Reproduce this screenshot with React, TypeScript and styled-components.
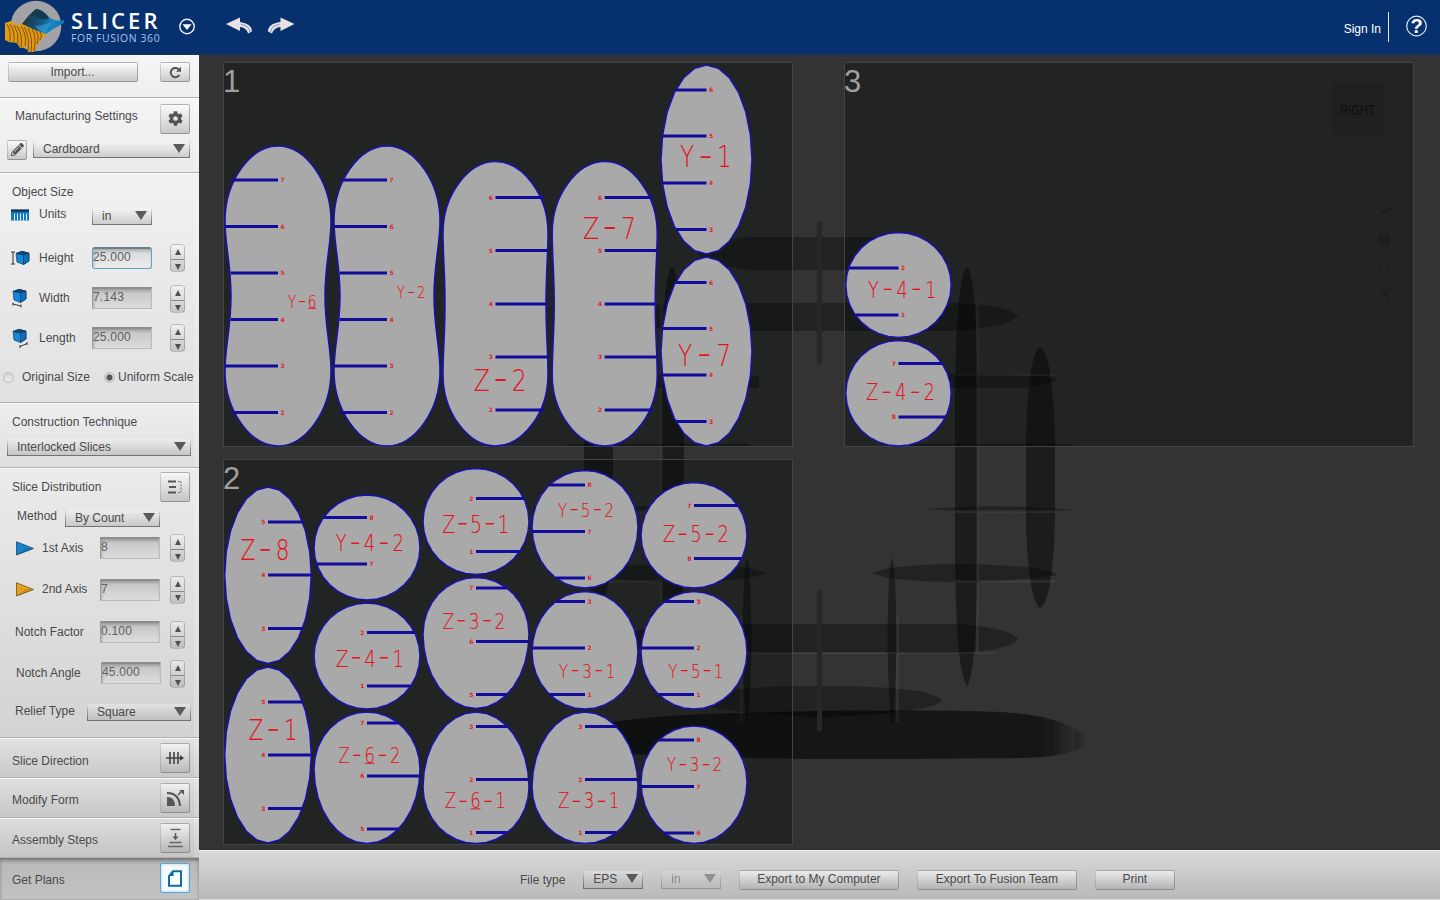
import React from "react";
import styled, { createGlobalStyle, css } from "styled-components";
import { FaCog, FaPencilAlt } from "react-icons/fa";

const GlobalStyle = createGlobalStyle`
  *, *::before, *::after { box-sizing: border-box; }
  body { margin: 0; background: #333; overflow: hidden; }
  body, button, input { font-family: "Liberation Sans", Arial, Helvetica, sans-serif; font-size: 12px; color: #4a4a4c; }
`;

const Page = styled.div`
  width: 1440px;
  height: 900px;
  display: flex;
  flex-direction: column;
`;

/* ---------- header ---------- */

const Header = styled.header`
  height: 55px;
  flex: none;
  display: flex;
  align-items: center;
  background: linear-gradient(#07306f 0, #07306e 52px, #16325a 55px);
  color: #fff;
`;

const LogoMark = styled.svg`
  width: 68px;
  height: 55px;
  flex: none;
`;

const Brand = styled.div`
  width: 109px;
  padding: 0 0 1px 3px;
  white-space: nowrap;
`;

const BrandName = styled.div`
  font: 600 22px/22px "Open Sans", sans-serif;
  letter-spacing: 3.1px;
`;

const BrandSub = styled.div`
  font: 400 10.4px/14px "Open Sans", sans-serif;
  letter-spacing: 0.62px;
  color: #a9c5ee;
`;

const HeaderIcon = styled.svg<{ $w: number; $ml?: number }>`
  width: ${(p) => p.$w}px;
  height: 24px;
  margin-left: ${(p) => p.$ml ?? 0}px;
  flex: none;
  overflow: visible;
`;

const Account = styled.div`
  margin-left: auto;
  display: flex;
  align-items: center;
  padding: 0 12px 2px 0;
`;

const SignIn = styled.a`
  font-size: 12px;
  padding: 4px 7px 0 0;
`;

const Divider = styled.span`
  width: 1px;
  height: 30px;
  background: #dfe8f8;
  margin-right: 16px;
`;

/* ---------- body ---------- */

const Body = styled.div`
  flex: 1;
  display: flex;
  min-height: 0;
`;

const Sidebar = styled.aside`
  width: 199px;
  flex: none;
  display: flex;
  flex-direction: column;
  background: #ddd;
`;

const Section = styled.section<{ $h: number; $from: string; $to: string; $active?: boolean }>`
  height: ${(p) => p.$h}px;
  flex: none;
  background: linear-gradient(${(p) => p.$from}, ${(p) => p.$to});
  border-bottom: 1px solid #b0b0b0;
  box-shadow: inset 0 1px 0 rgba(255, 255, 255, 0.75), inset -5px 0 0 rgba(255, 255, 255, 0.18);
  ${(p) =>
    p.$active &&
    css`
      box-shadow: inset 0 3px 4px -1px rgba(0, 0, 0, 0.45);
    `}
`;

const Row = styled.div<{ $h: number; $pl?: number; $align?: string }>`
  height: ${(p) => p.$h}px;
  display: flex;
  align-items: ${(p) => p.$align ?? "center"};
  padding-left: ${(p) => p.$pl ?? 12}px;
  padding-right: 9px;
`;

const Label = styled.span<{ $w?: number; $dy?: number }>`
  ${(p) => p.$w && `width: ${p.$w}px;`}
  flex: none;
  white-space: nowrap;
  letter-spacing: 0;
  line-height: 14px;
  margin-top: ${(p) => p.$dy ?? 0}px;
`;

const buttonFace = css`
  background: linear-gradient(rgba(255, 255, 255, 0.6), rgba(170, 170, 170, 0.55));
  border: 1px solid rgba(120, 120, 120, 0.3);
  border-bottom-color: rgba(80, 80, 80, 0.6);
  border-right-color: rgba(90, 90, 90, 0.45);
  border-radius: 2px;
`;

const PushButton = styled.button<{ $w: number }>`
  ${buttonFace}
  width: ${(p) => p.$w}px;
  height: 20px;
  padding: 0 1px 1px 0;
  letter-spacing: 0;
`;

const IconButton = styled.button<{ $w?: number; $h?: number; $active?: boolean }>`
  ${buttonFace}
  width: ${(p) => p.$w ?? 30}px;
  height: ${(p) => p.$h ?? 30}px;
  padding: 0;
  display: flex;
  align-items: center;
  justify-content: center;
  flex: none;
  color: #555;
  ${(p) =>
    p.$active &&
    css`
      background: #f6fafd;
      border-color: #5aa6d8;
      box-shadow: inset 0 0 3px #9fcdea;
    `}
`;

const Push = styled.span`
  flex: 1;
`;

const SelectBox = styled.div<{ $w: number; $h?: number; $pl?: number; $disabled?: boolean }>`
  width: ${(p) => p.$w}px;
  height: ${(p) => p.$h ?? 17}px;
  flex: none;
  display: flex;
  align-items: center;
  justify-content: space-between;
  padding: 0 4px 0 ${(p) => p.$pl ?? 10}px;
  line-height: 14px;
  letter-spacing: 0;
  white-space: nowrap;
  background: linear-gradient(rgba(255, 255, 255, 0.3), rgba(165, 165, 165, 0.45));
  border: solid #777;
  border-width: 0 1px 1px;
  border-image: linear-gradient(rgba(120, 120, 120, 0), rgba(90, 90, 90, 0.85)) 1;
  opacity: ${(p) => (p.$disabled ? 0.5 : 1)};
`;

const Caret = styled.span`
  width: 0;
  height: 0;
  margin-top: -1px;
  border: 6px solid transparent;
  border-top: 9px solid #5a5a5c;
  border-bottom: 0;
`;

const Select = ({ value, ...rest }: { value: string; $w: number; $h?: number; $pl?: number; $disabled?: boolean }) => (
  <SelectBox {...rest}>
    {value}
    <Caret />
  </SelectBox>
);

const Field = styled.input<{ $focus?: boolean }>`
  width: 60px;
  height: 22px;
  flex: none;
  padding: 0 0 3px 0;
  letter-spacing: 0.2px;
  color: #606060;
  border: 1px solid #bbb;
  border-top: 2px solid #8d8d8d;
  border-left-color: #999;
  border-radius: 1px;
  outline: none;
  background: linear-gradient(#c4c4c4, #dcdcdc);
  box-shadow: inset 1px 2px 3px rgba(0, 0, 0, 0.2);
  ${(p) =>
    p.$focus &&
    css`
      background: linear-gradient(#d4d8da, #ececec);
      border: 1px solid #5fa3c4;
      border-top: 2px solid #6b7f8a;
      border-radius: 3px;
    `}
`;

const StepperBox = styled.div<{ $dy?: number }>`
  width: 15px;
  height: 28px;
  margin: ${(p) => p.$dy ?? 0}px 5px 0 auto;
  flex: none;
  display: grid;
  grid-template-rows: 14px 14px;
  border: 1px solid rgba(110, 110, 110, 0.4);
  border-top-color: rgba(110, 110, 110, 0.15);
  border-radius: 4px;
  background: linear-gradient(rgba(255, 255, 255, 0.35), rgba(150, 150, 150, 0.4));
`;

const Step = styled.span<{ $down?: boolean }>`
  display: flex;
  align-items: center;
  justify-content: center;
  ${(p) => p.$down && "border-top: 1px solid #888;"}
  &::after {
    content: "";
    border: 3.5px solid transparent;
    ${(p) =>
      p.$down
        ? "border-top: 6px solid #505052; border-bottom: 0;"
        : "border-bottom: 6px solid #505052; border-top: 0;"}
  }
`;

const Stepper = ({ $dy }: { $dy?: number }) => (
  <StepperBox $dy={$dy}>
    <Step />
    <Step $down />
  </StepperBox>
);

const Radio = styled.span<{ $on?: boolean; $mr: number }>`
  width: 11px;
  height: 11px;
  margin-right: ${(p) => p.$mr}px;
  border-radius: 50%;
  flex: none;
  border: 1px solid #bcbcbc;
  background: ${(p) => (p.$on ? "radial-gradient(circle, #555 0 2.6px, #d4d4d4 3.4px)" : "linear-gradient(#d2d2d2, #eee)")};
`;

const Glyph = styled.svg<{ $w: number; $h: number; $mr?: number }>`
  width: ${(p) => p.$w}px;
  height: ${(p) => p.$h}px;
  margin-right: ${(p) => p.$mr ?? 0}px;
  flex: none;
  overflow: visible;
`;

const Cube = ({ x = 0, y = 0 }) => (
  <g transform={`translate(${x} ${y})`} stroke="#123a5e" strokeWidth=".7" strokeLinejoin="round">
    <path d="M0 2.5 6 .3 13 2.2V10L7.5 13.5 1 11z" fill="#1487db" />
    <path d="M0 2.5 6 .3 13 2.2 7.5 4z" fill="#16486f" />
    <path d="M7.5 4 13 2.2V10L7.5 13.5z" fill="#0f6db8" />
  </g>
);

/* ---------- plan sheets ---------- */

const Main = styled.main`
  flex: 1;
  display: flex;
  flex-direction: column;
  min-width: 0;
`;

const Board = styled.div`
  flex: 1;
  position: relative;
  background: #333;
  padding: 7px 0 0 24px;
  display: grid;
  grid-template-rows: 385px 386px;
  grid-template-columns: 570px 570px;
  grid-auto-flow: column;
  gap: 12px 51px;
  min-height: 0;
  overflow: hidden;
`;

const Ghost = styled.svg`
  position: absolute;
  inset: 0;
  width: 1241px;
  height: 795px;
`;

const Sheet = styled.section`
  position: relative;
  border: 1px solid #424343;
  background: rgba(4, 6, 5, 0.35);
`;

const SheetNo = styled.h2`
  position: absolute;
  top: 3px;
  left: -1px;
  margin: 0;
  font-size: 31px;
  line-height: 31px;
  font-weight: 400;
  color: #a0a0a0;
`;

const Plan = styled.svg`
  display: block;
  width: 568px;
  height: 100%;
  overflow: visible;
`;

const PartLabel = styled.text`
  font-family: "DejaVu Sans Light", "DejaVu Sans", sans-serif;
  font-weight: 200;
  fill: #e3141c;
  stroke: #e3141c;
  stroke-width: 0.15px;
  text-anchor: middle;
`;

const NotchNo = styled.text`
  font: 700 6px "DejaVu Sans", sans-serif;
  fill: #e3202a;
  text-anchor: middle;
`;

type Part = {
  name: string;
  box: [number, number, number, number];
  cx: number;
  rx: number;
  top: number;
  mid: number;
  bottom: number;
  sides?: number;
  waist?: number;
  slot: "L" | "R";
  ys: number[];
  nos: string;
};

const halfWidth = (p: Part, y: number) => {
  const ry = y < p.mid ? p.mid - p.top : p.bottom - p.mid;
  const k = (y - p.mid) / ry;
  return p.rx * Math.sqrt(Math.max(0, 1 - k * k));
};

const outline = (p: Part) => {
  if (p.waist) {
    const { cx, rx, top: t, bottom: b, waist } = p;
    const h = b - t;
    const u = t + h * 0.25;
    const v = b - h * 0.25;
    const w = rx - waist;
    const c = rx * 0.53;
    return (
      `M${cx} ${t}C${cx - c} ${t} ${cx - rx} ${t + h * 0.12} ${cx - rx} ${u}` +
      `C${cx - rx} ${u + 24} ${cx - w} ${p.mid - 32} ${cx - w} ${p.mid}` +
      `C${cx - w} ${p.mid + 32} ${cx - rx} ${v - 24} ${cx - rx} ${v}` +
      `C${cx - rx} ${b - h * 0.12} ${cx - c} ${b} ${cx} ${b}` +
      `C${cx + c} ${b} ${cx + rx} ${b - h * 0.12} ${cx + rx} ${v}` +
      `C${cx + rx} ${v - 24} ${cx + w} ${p.mid + 32} ${cx + w} ${p.mid}` +
      `C${cx + w} ${p.mid - 32} ${cx + rx} ${u + 24} ${cx + rx} ${u}` +
      `C${cx + rx} ${t + h * 0.12} ${cx + c} ${t} ${cx} ${t}Z`
    );
  }
  const n = p.sides ?? 32;
  const pts = Array.from({ length: n }, (_, i) => {
    const a = (i / n) * Math.PI * 2;
    const ry = Math.cos(a) > 0 ? p.mid - p.top : p.bottom - p.mid;
    return `${(p.cx + Math.sin(a) * p.rx).toFixed(1)} ${(p.mid - Math.cos(a) * ry).toFixed(1)}`;
  });
  return `M${pts.join("L")}Z`;
};

const slotReach = (p: Part, y: number, i: number) => {
  if (!p.waist) return halfWidth(p, y);
  return (p.ys.length === 6 ? [46.5, 53, 47.5, 47.5, 53, 46.5] : [48, 52.5, 50.5, 52.5, 48])[i];
};

const SQUEEZE = 0.78;

const PartShape = ({ part }: { part: Part }) => {
  const [l, r, t, b] = part.box;
  const h = b - t;
  const glyph = h * 0.62;
  const chars = part.name.split("");
  const step = (r - l - glyph) / (chars.length - 1);
  const size = h / 0.729;
  const dash = size * 1.5;
  const dir = part.slot === "L" ? -1 : 1;
  return (
    <g>
      <path d={outline(part)} fill="#a9a9a9" stroke="#1712b4" strokeWidth="1.5" />
      {part.ys.map((y, i) => (
        <React.Fragment key={y}>
          <path d={`M${part.cx} ${y}h${dir * slotReach(part, y, i)}`} stroke="#120c9c" strokeWidth="3" />
          <NotchNo x={part.cx - dir * 4.7} y={y + 2.3}>
            {part.nos[i]}
          </NotchNo>
        </React.Fragment>
      ))}
      <PartLabel transform={`scale(${SQUEEZE} 1)`}>
        {chars.map((c, i) =>
          c === "-" ? (
            <tspan
              key={i}
              x={(l + glyph / 2 + step * i) / SQUEEZE}
              y={b - h * 0.53 + dash * 0.33}
              fontSize={dash}
              fontFamily="Inter, sans-serif"
              strokeWidth="0"
            >
              -
            </tspan>
          ) : (
            <tspan key={i} x={(l + glyph / 2 + step * i) / SQUEEZE} y={b} fontSize={size}>
              {c}
            </tspan>
          )
        )}
      </PartLabel>
      {chars.map((c, i) =>
        c === "6" ? (
          <path key={i} d={`M${l + step * i} ${b + 0.6}h${glyph}`} stroke="#e3141c" strokeWidth="1" />
        ) : null
      )}
    </g>
  );
};

const tall = { rx: 53, top: 146, mid: 296, bottom: 446, waist: 6, slot: "L" as const, ys: [180, 226.5, 273, 319.5, 366, 412.5], nos: "765432" };
const block = { rx: 52.5, top: 161.5, mid: 303.5, bottom: 446, waist: 2, slot: "R" as const, ys: [197.5, 250.5, 304, 357, 410], nos: "65432" };

const sheet1: Part[] = [
  { name: "Y-6", box: [288, 316, 295, 307.7], cx: 278, ...tall },
  { name: "Y-2", box: [397, 425, 285.5, 297.7], cx: 387, ...tall },
  { name: "Z-2", box: [475, 526, 369, 391], cx: 495.5, ...block },
  { name: "Z-7", box: [584.3, 635.3, 217, 239], cx: 604.7, ...block },
  { name: "Y-1", box: [680.3, 731, 145.7, 167.3], cx: 706.5, rx: 45.5, top: 65, mid: 159.5, bottom: 254, sides: 24, slot: "L", ys: [90, 136, 183, 229.5], nos: "6543" },
  { name: "Y-7", box: [678.3, 730.3, 344.3, 366], cx: 706.5, rx: 45.5, top: 257, mid: 351.5, bottom: 446, sides: 24, slot: "L", ys: [282.5, 328.5, 375, 421.5], nos: "6543" },
];

const sheet2: Part[] = [
  { name: "Z-8", box: [241.7, 289, 540, 560.3], cx: 268, rx: 43.3, top: 487, mid: 575, bottom: 663.5, sides: 24, slot: "R", ys: [522, 575, 628.5], nos: "543" },
  { name: "Z-1", box: [249.7, 297, 720, 740.3], cx: 268, rx: 43.3, top: 667, mid: 755, bottom: 843, sides: 24, slot: "R", ys: [702, 755, 808.5], nos: "543" },
  { name: "Y-4-2", box: [335.7, 403.5, 534.3, 551.3], cx: 367, rx: 53, top: 495, mid: 547.5, bottom: 600, slot: "L", ys: [517.5, 564], nos: "87" },
  { name: "Z-4-1", box: [336.7, 403.5, 649.3, 666.7], cx: 367, rx: 53, top: 603, mid: 656, bottom: 709, slot: "R", ys: [632.5, 686], nos: "21" },
  { name: "Z-6-2", box: [339.3, 400, 747.3, 762.7], cx: 367, rx: 53, top: 712, mid: 769, bottom: 843.5, slot: "R", ys: [723, 776, 829], nos: "765" },
  { name: "Z-5-1", box: [443.3, 509, 515, 532.7], cx: 476, rx: 53, top: 468.5, mid: 521.5, bottom: 574.5, slot: "R", ys: [498.5, 551.5], nos: "21" },
  { name: "Z-3-2", box: [443.3, 505, 612.7, 628.7], cx: 476, rx: 53, top: 577.5, mid: 634, bottom: 708.5, slot: "R", ys: [588, 641.5, 694.5], nos: "765" },
  { name: "Z-6-1", box: [445.7, 505.5, 792.7, 808.3], cx: 476, rx: 53, top: 712, mid: 787, bottom: 843.5, slot: "R", ys: [726.5, 779.5, 832.5], nos: "321" },
  { name: "Y-5-2", box: [558, 613.5, 502.3, 516.7], cx: 585, rx: 53, top: 470.5, mid: 527, bottom: 588, slot: "L", ys: [485, 531.5, 578], nos: "876" },
  { name: "Y-3-1", box: [559, 615, 663.7, 678], cx: 585, rx: 53, top: 591.5, mid: 652, bottom: 709, slot: "L", ys: [601.5, 648, 694.5], nos: "321" },
  { name: "Z-3-1", box: [559, 619, 792.7, 808.3], cx: 585, rx: 53, top: 712, mid: 787, bottom: 843.5, slot: "R", ys: [726.5, 779.5, 832.5], nos: "321" },
  { name: "Z-5-2", box: [663.7, 728.5, 525.3, 542.3], cx: 694, rx: 53, top: 482.5, mid: 535.5, bottom: 588, slot: "R", ys: [505.5, 558.5], nos: "78" },
  { name: "Y-5-1", box: [668.5, 723, 663.7, 678], cx: 694, rx: 53, top: 591.5, mid: 652, bottom: 709, slot: "L", ys: [601.5, 648, 694.5], nos: "321" },
  { name: "Y-3-2", box: [667, 722, 757, 771.5], cx: 694, rx: 53, top: 726, mid: 782, bottom: 843.5, slot: "L", ys: [740, 786.5, 833], nos: "876" },
];

const sheet3: Part[] = [
  { name: "Y-4-1", box: [868.3, 936, 281.5, 298], cx: 898.5, rx: 52.7, top: 232.5, mid: 285, bottom: 337.5, slot: "L", ys: [268, 315], nos: "21" },
  { name: "Z-4-2", box: [867.3, 934.5, 383.7, 400.2], cx: 898.5, rx: 52.7, top: 340.5, mid: 393.2, bottom: 446, slot: "R", ys: [363.5, 417], nos: "78" },
];

const sheets = [
  { no: "1", view: "224 63 568 383", parts: sheet1 },
  { no: "2", view: "224 460 568 384", parts: sheet2 },
  { no: "3", view: "845 63 568 383", parts: sheet3 },
];

const HalfModel = () => (
  <g>
    <path d="M819 237H890Q930 240 942 253Q930 266 890 270H819z" />
    <path d="M819 303H960Q1010 306 1018 316Q1010 326 960 331H819z" />
    <path d="M819 624H960Q1010 628 1018 639Q1010 650 960 653H819z" />
    <path d="M819 686Q935 686 942 701Q930 713 819 717z" />
    <path d="M967 267Q977 275 977.5 400V560Q977 670 967 686Q956 670 955 560V400Q956 275 967 267z" fillOpacity=".46" />
    <path d="M1040 347Q1053 355 1055 440V520Q1053 600 1040 608Q1028 600 1026 520V440Q1028 355 1040 347z" fillOpacity=".46" />
    <path d="M880 376Q960 370 1058 378Q1050 386 1020 388H880z" />
    <path d="M890 443.5H1060L1075 445 1060 447H890z" />
    <path d="M923 509Q999 503 1075 510Q999 515 923 509z" />
    <path d="M872 573Q890 564 967 564Q1050 566 1058 575Q1010 582 967 582Q890 582 872 573z" />
    <path d="M892 557Q896 570 896.500 640Q896 700 892 725Q888 700 887.500 640Q888 570 892 557z" fillOpacity=".4" />
    <g fill="#777" fillOpacity=".16">
      <path d="M955 374h100v2h-100zM955 510h100v3h-100zM955 580h100v3h-100zM896 616h3v106h-3zM755 652h240v2h-240zM976 302h3v350h-3z" />
    </g>
  </g>
);

const Model = () => (
  <Ghost viewBox="199 55 1241 795">
    <defs>
      <filter id="soft" x="-10%" y="-30%" width="120%" height="160%">
        <feGaussianBlur stdDeviation="0.7" />
      </filter>
      <linearGradient id="shade">
        <stop offset="0" stopColor="#141414" stopOpacity="0" />
        <stop offset=".09" stopColor="#141414" />
        <stop offset=".91" stopColor="#141414" />
        <stop offset="1" stopColor="#141414" stopOpacity="0" />
      </linearGradient>
    </defs>
    <g filter="url(#soft)">
      <path d="M560 736Q600 716 740 713Q900 708 1000 712Q1070 716 1088 740Q1080 757 1020 758Q800 760 700 757Q580 755 560 736z" fill="url(#shade)" />
      <g fill="#000" fillOpacity=".33">
        <HalfModel />
        <g transform="translate(1639 0) scale(-1 1)">
          <HalfModel />
        </g>
      </g>
      <path d="M817.500 222h4v142h-4zM817.500 591h4v140h-4z" fill="#2b2722" stroke="#2b2722" strokeLinejoin="round" />
    </g>
    <path d="M1331 82h53v53h-53z" fill="#2f2f2f" />
    <text x="1357.500" y="114.500" fontSize="15" textAnchor="middle" textLength="35" lengthAdjust="spacingAndGlyphs" fill="#161616" fontFamily="Liberation Sans, sans-serif">
      RIGHT
    </text>
    <g fill="none" stroke="#282828" strokeWidth="2">
      <path d="m1379 209 5 4 7-5M1380 236l9 6m0-6-9 6M1380 290l9 8m0-8-9 8" />
      <circle cx="1384" cy="239" r="5" />
      <circle cx="1384" cy="266" r="5" strokeOpacity=".6" />
      <circle cx="1384" cy="322" r="6" strokeOpacity=".6" />
    </g>
  </Ghost>
);

/* ---------- footer ---------- */

const Footer = styled.footer`
  height: 50px;
  flex: none;
  display: flex;
  align-items: center;
  gap: 18px;
  padding: 9px 0 0 321px;
  border-top: 1px solid #efefef;
  border-bottom: 1px solid #d9d9d9;
  background: linear-gradient(#d9d9d9, #b9b9b9);
`;

const Axis = ({ color, edge }: { color: string; edge: string }) => (
  <Glyph $w={18} $h={15} $mr={8} viewBox="0 0 18 15">
    <path d="M.5.8 17.500 7.500.5 14z" fill={color} stroke={edge} strokeWidth=".8" />
    <path d="M1 14 9 7l8 .5z" fill="#000" opacity=".12" />
  </Glyph>
);

export default function App() {
  return (
    <Page>
      <GlobalStyle />
      <Header>
        <LogoMark viewBox="0 0 68 55">
          <defs>
            <linearGradient id="wave" x1="24" y1="14" x2="62" y2="26" gradientUnits="userSpaceOnUse">
              <stop offset="0" stopColor="#24343c" />
              <stop offset=".4" stopColor="#155079" />
              <stop offset=".75" stopColor="#1787c4" />
              <stop offset="1" stopColor="#1572b4" />
            </linearGradient>
          </defs>
          <circle cx="36" cy="26" r="25.300" fill="#a3a2a4" />
          <path d="M5 23 11 21 17 25 25 22 34 27 45 30 47 34 42 39 38 43 36 49 34 52 28 52 27 47 20 48 17 43 9 42 5 40z" fill="#e39a13" />
          <g stroke="#6b4a0c" strokeWidth=".9" fill="none">
            <path d="M7 24q4 6 3 17M10 24q5 7 4 18M14 25q5 8 4 18M17 26q6 8 4 21M21 26q6 9 4 20M24 27q6 9 4 24M28 28q5 9 3 24M32 29q5 8 2 22M36 31q4 6 1 13M40 32q3 4 0 8" />
          </g>
          <path d="M22 24Q30 13 36 9Q42 9 50 18Q57 22 64 20V23Q54 28 46 34Q34 30 22 24z" fill="url(#wave)" />
          <path d="M30 16Q34 10 37 9Q43 10 49 18Q44 21 38 18Q34 15 30 16z" fill="#143a52" />
          <path d="M35 26Q46 25 51 22Q47 28 46 34Q40 32 35 26z" fill="#38a5d9" opacity=".6" />
        </LogoMark>
        <Brand>
          <BrandName>SLICER</BrandName>
          <BrandSub>FOR FUSION 360</BrandSub>
        </Brand>
        <HeaderIcon $w={20} $ml={-3} viewBox="0 0 20 24">
          <circle cx="13" cy="10.500" r="7.200" fill="none" stroke="#e8effa" strokeWidth="1.400" />
          <path d="M8.500 8.200h9L13 14z" fill="#fff" />
        </HeaderIcon>
        <HeaderIcon $w={27} $ml={32} viewBox="0 0 27 24">
          <path d="M0 8 14 1.500V6Q26 7.500 26 15.500L22 17.500Q20.500 11.500 14 11V15z" fill="#e6e2e8" />
          <path d="M15 8.500q8 1 9 7.500" stroke="#8c90a8" fill="none" />
        </HeaderIcon>
        <HeaderIcon $w={27} $ml={15} viewBox="0 0 27 24">
          <path d="M26.500 8 12.500 1.500V6Q0 7.500 0 15.500L4 17.500Q6 11.500 12.500 11V15z" fill="#e6e2e8" />
          <path d="M11.500 8.500q-8 1-9 7.500" stroke="#8c90a8" fill="none" />
        </HeaderIcon>
        <Account>
          <SignIn>Sign In</SignIn>
          <Divider />
          <HeaderIcon $w={23} viewBox="0 0 23 24">
            <circle cx="11.500" cy="11" r="9.800" fill="none" stroke="#dce6f7" strokeWidth="1.200" />
            <text x="11.500" y="17.800" fontSize="20" fontWeight="700" textAnchor="middle" fill="#fff">
              ?
            </text>
          </HeaderIcon>
        </Account>
      </Header>

      <Body>
        <Sidebar>
          <Section $h={43} $from="#f6f6f6" $to="#eeeeee">
            <Row $h={34} $pl={8}>
              <PushButton $w={130}>Import...</PushButton>
              <Push />
              <IconButton $h={20}>
                <Glyph $w={13} $h={13} viewBox="0 0 13 13">
                  <path d="M10.300 9A4.600 4.600 0 1 1 9.500 3.200" fill="none" stroke="#555" strokeWidth="2" />
                  <path d="M7 5.800h5V.8z" fill="#555" />
                </Glyph>
              </IconButton>
            </Row>
          </Section>

          <Section $h={75} $from="#f5f5f5" $to="#ebebeb">
            <Row $h={41} $pl={15}>
              <Label $dy={-6}>Manufacturing Settings</Label>
              <Push />
              <IconButton>
                <FaCog size={15} />
              </IconButton>
            </Row>
            <Row $h={21} $pl={7}>
              <IconButton $w={20} $h={20}>
                <FaPencilAlt size={13} />
              </IconButton>
              <Push />
              <Select $w={157} value="Cardboard" $pl={9} />
            </Row>
          </Section>

          <Section $h={230} $from="#f1f1f1" $to="#e1e1e1">
            <Row $h={26} $align="flex-end">
              <Label>Object Size</Label>
            </Row>
            <Row $h={34} $pl={11}>
              <Glyph $w={18} $h={11} $mr={10} viewBox="0 0 18 11">
                <path d="M0 -1.500h18v11H0z" fill="#1277bd" />
                <path d="M0 -1.500h18V1H0z" fill="#163d5c" />
                <path d="M3.500 2.500v7M6.500 2.500v7M9.500 2.500v7M12.500 2.500v7M15.500 2.500v7" stroke="#e4f1fa" />
              </Glyph>
              <Label $w={53} $dy={-4}>
                Units
              </Label>
              <Select $w={60} value="in" $pl={9} />
            </Row>
            <Row $h={50} $pl={11}>
              <Glyph $w={18} $h={14} $mr={10} viewBox="0 0 18 14">
                <path d="M0 1h4M2 1v12M0 13h4" stroke="#333" fill="none" />
                <Cube x={5} />
              </Glyph>
              <Label $w={53}>Height</Label>
              <Field $focus defaultValue="25.000" />
              <Stepper />
            </Row>
            <Row $h={30} $pl={13}>
              <Glyph $w={16} $h={18} $mr={10} viewBox="0 0 16 18">
                <Cube />
                <path d="m0 15 8 2M0 13.500v3M8 15.500v3" stroke="#333" fill="none" />
              </Glyph>
              <Label $w={53}>Width</Label>
              <Field defaultValue="7.143" />
              <Stepper $dy={2} />
            </Row>
            <Row $h={50} $pl={13}>
              <Glyph $w={16} $h={18} $mr={10} viewBox="0 0 16 18">
                <Cube />
                <path d="m7 17.500 7-3M7 16v3M14 13v3" stroke="#333" fill="none" />
              </Glyph>
              <Label $w={53}>Length</Label>
              <Field defaultValue="25.000" />
              <Stepper />
            </Row>
            <Row $h={28} $pl={3}>
              <Radio $mr={8} />
              <Label $w={82}>Original Size</Label>
              <Radio $on $mr={3} />
              <Label>Uniform Scale</Label>
            </Row>
          </Section>

          <Section $h={65} $from="#efefef" $to="#dedede">
            <Row $h={37}>
              <Label>Construction Technique</Label>
            </Row>
            <Row $h={15} $pl={7}>
              <Select $w={184} value="Interlocked Slices" $pl={9} />
            </Row>
          </Section>

          <Section $h={270} $from="#ebebeb" $to="#d3d3d3">
            <Row $h={38}>
              <Label>Slice Distribution</Label>
              <Push />
              <IconButton>
                <Glyph $w={14} $h={14} viewBox="0 0 14 14">
                  <path d="M0 1.500h8M1 7h7M0 12.500h8" stroke="#555" strokeWidth="2" />
                  <path d="M10 1.500h3v11h-3" stroke="#777" fill="none" strokeDasharray="2 1" />
                </Glyph>
              </IconButton>
            </Row>
            <Row $h={24} $pl={17}>
              <Label $w={48} $dy={-4}>
                Method
              </Label>
              <Select $w={95} value="By Count" $pl={9} />
            </Row>
            <Row $h={36} $pl={16}>
              <Axis color="#1683cf" edge="#1c4666" />
              <Label $w={58}>1st Axis</Label>
              <Field defaultValue="8" />
              <Stepper />
            </Row>
            <Row $h={47} $pl={16}>
              <Axis color="#eba01d" edge="#6f5222" />
              <Label $w={58} $dy={-1}>
                2nd Axis
              </Label>
              <Field defaultValue="7" />
              <Stepper />
            </Row>
            <Row $h={38} $pl={15}>
              <Label $w={85}>Notch Factor</Label>
              <Field defaultValue="0.100" />
              <Stepper $dy={6} />
            </Row>
            <Row $h={44} $pl={16}>
              <Label $w={85}>Notch Angle</Label>
              <Field defaultValue="45.000" />
              <Stepper $dy={2} />
            </Row>
            <Row $h={34} $pl={15}>
              <Label $w={72} $dy={-2}>
                Relief Type
              </Label>
              <Select $w={104} value="Square" $pl={9} />
            </Row>
          </Section>

          <Section $h={40} $from="#e2e2e2" $to="#c9c9c9">
            <Row $h={39}>
              <Label $dy={6}>Slice Direction</Label>
              <Push />
              <IconButton>
                <Glyph $w={18} $h={12} viewBox="0 0 18 12">
                  <path d="M0 6h16M4 0v12M8 0v12M12 0v12" stroke="#444" strokeWidth="1.600" />
                  <path d="m14 3 4 3-4 3z" fill="#444" />
                </Glyph>
              </IconButton>
            </Row>
          </Section>
          <Section $h={40} $from="#dfdfdf" $to="#c7c7c7">
            <Row $h={39}>
              <Label $dy={4}>Modify Form</Label>
              <Push />
              <IconButton>
                <Glyph $w={18} $h={16} viewBox="0 0 18 16">
                  <path d="M1 7q8 0 8 9H1z" fill="#555" />
                  <path d="M1 3q12 0 13 13" fill="none" stroke="#555" strokeWidth="2" />
                  <path d="m12 5 3-3" stroke="#555" strokeWidth="1.500" />
                  <path d="M13 0h5v5z" fill="#555" />
                </Glyph>
              </IconButton>
            </Row>
          </Section>
          <Section $h={40} $from="#dddddd" $to="#c4c4c4">
            <Row $h={39}>
              <Label $dy={4}>Assembly Steps</Label>
              <Push />
              <IconButton>
                <Glyph $w={15} $h={20} viewBox="0 0 15 20">
                  <path d="M2.500 1.500h10M1.500 14.500h12M0 18.500h15" stroke="#666" strokeWidth="1.700" />
                  <path d="M7.500 5v4" stroke="#555" strokeWidth="1.500" />
                  <path d="M4.500 8.500h6l-3 3.500z" fill="#555" />
                </Glyph>
              </IconButton>
            </Row>
          </Section>
          <Section $h={42} $from="#b9b9b9" $to="#c2c2c2" $active>
            <Row $h={40}>
              <Label $dy={4}>Get Plans</Label>
              <Push />
              <IconButton $active>
                <Glyph $w={14} $h={17} viewBox="0 0 14 17">
                  <path d="M5 1.200h8v14.600H1V6z" fill="#fff" stroke="#0f6cab" strokeWidth="2" />
                  <path d="M5.500 1.500V6H1z" fill="#0f6cab" />
                </Glyph>
              </IconButton>
            </Row>
          </Section>
        </Sidebar>

        <Main>
          <Board>
            <Model />
            {sheets.map((s) => (
              <Sheet key={s.no}>
                <SheetNo>{s.no}</SheetNo>
                <Plan viewBox={s.view}>
                  {s.parts.map((p) => (
                    <PartShape key={p.name} part={p} />
                  ))}
                </Plan>
              </Sheet>
            ))}
          </Board>
          <Footer>
            <Label>File type</Label>
            <Select $w={60} $h={18} value="EPS" $pl={9} />
            <Select $w={60} $h={18} value="in" $pl={9} $disabled />
            <PushButton $w={160}>Export to My Computer</PushButton>
            <PushButton $w={160}>Export To Fusion Team</PushButton>
            <PushButton $w={80}>Print</PushButton>
          </Footer>
        </Main>
      </Body>
    </Page>
  );
}
